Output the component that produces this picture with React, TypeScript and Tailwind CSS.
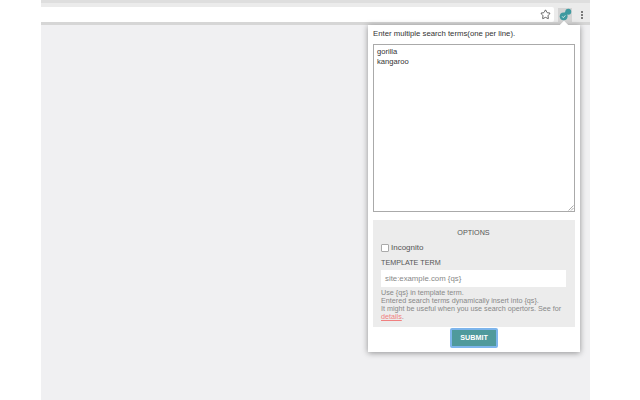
import React from "react";
import { Star } from "lucide-react";

const ExtensionIcon = () => (
  <svg width="13" height="13" viewBox="0 0 14 14">
    <circle cx="5" cy="9" r="4.2" fill="#3f9aa0" />
    <circle cx="10" cy="4" r="3.2" fill="#3f9aa0" />
    <path d="M5 6 L9 8 L8 3 Z" fill="#3f9aa0" />
    <path d="M3.4 9 L4.6 10.4 L6.8 8" stroke="#d8ecec" strokeWidth="1" fill="none" />
  </svg>
);

const App = () => {
  return (
    <div className="flex h-[400px] w-[640px] overflow-hidden bg-white font-['Liberation_Sans',sans-serif]">
      <div className="relative ml-[41px] flex h-full w-[549px] flex-col bg-[#f0f0f2]">
        <div className="h-[3px] bg-[#dedede]" />
        <div className="h-[4px] bg-[#ebebeb]" />
        <div className="flex h-[15px] items-center bg-[#ebebeb]">
          <div className="flex h-full w-[513px] items-center justify-end rounded-r-[2px] bg-white pr-[3px]">
            <Star size={11} strokeWidth={1.6} className="text-[#333]" />
          </div>
          <div className="ml-[4px] flex h-[14px] w-[14px] items-center justify-center bg-[#d4d4d4]">
            <ExtensionIcon />
          </div>
          <div className="ml-[9px] flex flex-col gap-[1px]">
            <span className="h-[2px] w-[2px] rounded-full bg-[#555]" />
            <span className="h-[2px] w-[2px] rounded-full bg-[#555]" />
            <span className="h-[2px] w-[2px] rounded-full bg-[#555]" />
          </div>
        </div>
        <div className="h-[3px] bg-[#d6d6d6]" />

        <div className="absolute left-[327px] top-[25px] flex h-[327px] w-[212px] flex-col bg-white px-[5px] shadow-[0_1px_6px_rgba(0,0,0,0.4)]">
          <div className="absolute -top-[3px] left-[193px] h-[6px] w-[6px] rotate-45 bg-white" />
          <p className="pt-[4px] text-[7.75px] leading-[10px] text-[#333]">
            Enter multiple search terms(one per line).
          </p>
          <div className="relative mt-[5px] h-[168px] w-full border border-[#aaaaaa] px-[3px] py-[2px] text-[7.6px] leading-[10px] text-[#333]">
            <div>gorilla</div>
            <div>kangaroo</div>
            <svg className="absolute bottom-0 right-0" width="6" height="6" viewBox="0 0 6 6">
              <path d="M0.5 5.5 L5.5 0.5 M3 5.5 L5.5 3" stroke="#888" strokeWidth="0.7" />
            </svg>
          </div>
          <div className="mt-[8px] flex h-[107px] flex-col bg-[#ececec] pl-[8px] pr-[9px] pt-[8px]">
            <div className="text-center text-[7.2px] leading-[10px] text-[#555]">OPTIONS</div>
            <label className="mt-[5px] flex items-center gap-[2px] text-[8px] leading-[10px] text-[#555]">
              <span className="h-[8px] w-[8px] rounded-[1px] border border-[#aaa] bg-white" />
              Incognito
            </label>
            <div className="mt-[5px] text-[7.2px] leading-[10px] text-[#555]">TEMPLATE TERM</div>
            <div className="mt-[2px] flex h-[17px] items-center bg-white px-[4px] text-[7.8px] text-[#888]">
              site:example.com {"{qs}"}
            </div>
            <p className="mt-[2px] whitespace-nowrap text-[7.2px] leading-[8px] text-[#888]">
              Use {"{qs}"} in template term.
              <br />
              Entered search terms dynamically insert into {"{qs}"}.
              <br />
              It might be useful when you use search opertors. See for
              <br />
              <span className="text-[#f08080] underline">details</span>.
            </p>
          </div>
          <div className="flex flex-1 items-start justify-center pt-px">
            <button
              type="button"
              className="flex h-[20px] w-[48px] items-center justify-center rounded-[2px] border-2 border-[#7db5ec] bg-[#4f9a9c] text-[7.2px] font-bold text-white"
            >
              SUBMIT
            </button>
          </div>
        </div>
      </div>
    </div>
  );
};

export default App;
